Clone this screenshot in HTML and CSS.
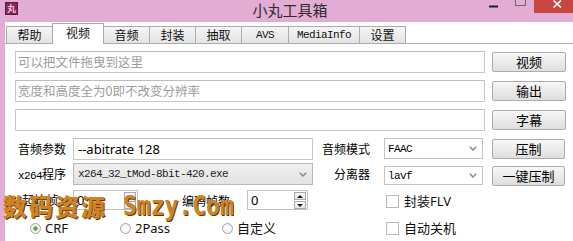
FILE: index.html
```html
<!DOCTYPE html>
<html lang="zh-CN">
<head>
<meta charset="utf-8">
<title>小丸工具箱</title>
<link rel="stylesheet" href="styles.css">
</head>
<body>
<div class="window">
  <div class="titlebar">
    <div class="tb-left"><span class="app-icon">丸</span></div>
    <span class="title">小丸工具箱</span>
    <div class="tb-right">
      <svg class="controls" width="103" height="22" viewBox="0 0 103 22">
        <line x1="19" y1="6.5" x2="28" y2="6.5" stroke="#1e1e1e" stroke-width="2"/>
        <rect x="45.5" y="-2.5" width="10" height="8" fill="none" stroke="#6a6a6a" stroke-width="1"/>
        <rect x="64" y="0" width="39" height="13" fill="#c8463f"/>
        <path d="M83.5 0.5 L91 7.5 M91 0.5 L83.5 7.5" stroke="#ffffff" stroke-width="1.7"/>
      </svg>
    </div>
  </div>
  <div class="client">
    <div class="tabs">
      <span class="tab">帮助</span>
      <span class="tab active">视频</span>
      <span class="tab">音频</span>
      <span class="tab">封装</span>
      <span class="tab">抽取</span>
      <span class="tab mono-tab avs">AVS</span>
      <span class="tab mono-tab">MediaInfo</span>
      <span class="tab">设置</span>
    </div>
    <div class="panel">
      <div class="row row-file">
        <div class="field hint">可以把文件拖曳到这里</div>
        <button class="btn">视频</button>
      </div>
      <div class="row row-file">
        <div class="field hint">宽度和高度全为0即不改变分辨率</div>
        <button class="btn">输出</button>
      </div>
      <div class="row row-file">
        <div class="field"></div>
        <button class="btn">字幕</button>
      </div>
      <div class="row row-d">
        <span class="label">音频参数</span>
        <div class="field value">--abitrate 128</div>
        <span class="label-r">音频模式</span>
        <div class="select sel-d">
          <span class="mono">FAAC</span>
          <svg class="chev" width="8" height="5" viewBox="0 0 8 5"><path d="M0.8 0.8 L4 4 L7.2 0.8" fill="none" stroke="#8a8a8a" stroke-width="1.5"/></svg>
        </div>
        <button class="btn btn-sm btn-d">压制</button>
      </div>
      <div class="row row-e">
        <span class="label"><span class="mono">x264</span>程序</span>
        <div class="select select-wide">
          <span class="mono">x264_32_tMod-8bit-420.exe</span>
          <svg class="chev" width="8" height="5" viewBox="0 0 8 5"><path d="M0.8 0.8 L4 4 L7.2 0.8" fill="none" stroke="#8a8a8a" stroke-width="1.5"/></svg>
        </div>
        <span class="label-r">分离器</span>
        <div class="select sel-e">
          <span class="mono">lavf</span>
          <svg class="chev" width="8" height="5" viewBox="0 0 8 5"><path d="M0.8 0.8 L4 4 L7.2 0.8" fill="none" stroke="#8a8a8a" stroke-width="1.5"/></svg>
        </div>
        <button class="btn btn-sm btn-e">一键压制</button>
      </div>
      <div class="row row-f">
        <span class="label label-start">起始帧</span>
        <div class="spin spin-a">
          <span class="spin-val">0</span>
          <span class="spin-btns"><span class="sb"><i class="up"></i></span><span class="sb"><i class="down"></i></span></span>
        </div>
        <span class="label-count">编码帧数</span>
        <div class="spin spin-b">
          <span class="spin-val">0</span>
          <span class="spin-btns"><span class="sb"><i class="up"></i></span><span class="sb"><i class="down"></i></span></span>
        </div>
        <span class="check check-f"><span class="box"></span>封装FLV</span>
      </div>
      <div class="row row-g">
        <span class="opt opt-crf"><span class="radio on"></span>CRF</span>
        <span class="opt opt-2pass"><span class="radio"></span>2Pass</span>
        <span class="opt opt-custom"><span class="radio"></span>自定义</span>
        <span class="check"><span class="box"></span>自动关机</span>
      </div>
      <div class="watermark"><span class="wm-cn">数码资源</span><span class="wm-en">Smzy.Com</span></div>
    </div>
  </div>
</div>
</body>
</html>
```

FILE: styles.css
```css
* { box-sizing: border-box; }
html, body { margin: 0; padding: 0; }
body {
  width: 573px;
  height: 241px;
  overflow: hidden;
  background: #e2acd4;
  font-family: "Noto Sans CJK SC", "Noto Sans", sans-serif;
  font-size: 12px;
  color: #000;
}
.window {
  width: 573px;
  height: 241px;
  background: #e2acd4;
  display: flex;
  flex-direction: column;
}
.titlebar {
  height: 22px;
  flex: none;
  display: grid;
  grid-template-columns: 1fr auto 1fr;
  align-items: start;
}
.tb-left { display: flex; }
.app-icon {
  width: 13px;
  height: 13px;
  margin: 2px 0 0 5px;
  background: #84285a;
  border: 1px solid #5c1a3e;
  color: #f0bcd9;
  font-size: 9px;
  line-height: 11px;
  text-align: center;
  font-weight: bold;
}
.title {
  font-size: 15px;
  line-height: 20px;
  color: #2b2b2b;
  padding-left: 7px;
}
.tb-right { display: flex; justify-content: flex-end; }
.controls { display: block; }

.client {
  flex: 1;
  margin-left: 5px;
  background: #fff;
  display: flex;
  flex-direction: column;
}
.tabs {
  height: 21px;
  flex: none;
  display: flex;
  align-items: flex-end;
  padding-left: 1px;
}
.tab {
  height: 17px;
  min-width: 47px;
  padding: 0 6px;
  margin-right: -1px;
  border: 1px solid #acacac;
  border-bottom: none;
  background: linear-gradient(#f5f5f5, #e3e3e3);
  text-align: center;
  font-size: 12px;
  line-height: 16px;
  color: #111;
  white-space: nowrap;
}
.tab.active {
  height: 21px;
  min-width: 52px;
  margin-bottom: -1px;
  background: #fff;
  position: relative;
  z-index: 1;
  line-height: 17px;
}
.mono-tab {
  font-family: "Liberation Mono", monospace;
  font-size: 11px;
  letter-spacing: -0.6px;
  padding: 0 8px;
}
.tab.avs { min-width: 48px; }

.panel {
  position: relative;
  flex: 1;
  border-top: 1px solid #acacac;
  padding: 7px 7px 0 10px;
  display: flex;
  flex-direction: column;
}
.row { display: flex; align-items: center; flex: none; }
.row-file { height: 22px; margin-bottom: 7px; }
.field {
  width: 470px;
  height: 22px;
  border: 1px solid #c8c8c8;
  border-top-color: #bdbdbd;
  padding-left: 2px;
  font-size: 12.5px;
  line-height: 20px;
  white-space: nowrap;
  overflow: hidden;
}
.hint { color: #9c9c9c; }
.btn {
  display: block;
  width: 74px;
  height: 20px;
  margin: 0 0 0 7px;
  padding: 0;
  border: 1px solid #acacac;
  border-radius: 2px;
  background: linear-gradient(#f7f7f7, #dedede);
  font-family: "Noto Sans CJK SC", sans-serif;
  font-size: 13px;
  line-height: 18px;
  color: #000;
  text-align: center;
}
.btn-sm { width: 73px; margin-left: 9px; }

.row-d { height: 22px; margin-bottom: 3px; align-items: flex-start; }
.row-e { height: 22px; margin-bottom: 5px; align-items: flex-start; }
.label {
  width: 58px;
  padding-left: 3px;
  line-height: 22px;
  font-size: 12px;
  white-space: nowrap;
}
.row-d .field.value {
  width: 240px;
  padding-left: 4px;
  font-family: "Noto Sans", sans-serif;
  font-size: 13px;
  color: #000;
}
.label-r {
  width: 57px;
  text-align: right;
  line-height: 22px;
  font-size: 12px;
  white-space: nowrap;
}
.mono {
  font-family: "Liberation Mono", monospace;
  font-size: 11px;
  letter-spacing: -0.6px;
}
.select {
  display: flex;
  align-items: center;
  justify-content: space-between;
  border: 1px solid #c3c3c3;
  background: #fff;
  padding: 0 5px 0 3px;
  white-space: nowrap;
}
.select .chev { display: block; flex: none; }
.sel-d { width: 99px; height: 21px; margin-left: 14px; }
.btn-d { margin-top: 1px; }
.select-wide {
  width: 240px;
  height: 22px;
  padding-left: 4px;
  background: linear-gradient(#efefef, #e3e3e3);
  border-color: #bababa;
  color: #222;
}
.sel-e { width: 99px; height: 19px; margin-left: 14px; margin-top: 3px; }
.btn-e { margin-top: 3px; }

.row-f { height: 20px; margin-bottom: 11px; }
.label-start { padding-left: 7px; line-height: 20px; }
.label-count {
  width: 48px;
  margin-left: 44px;
  font-size: 12px;
  white-space: nowrap;
}
.spin {
  height: 20px;
  border: 1px solid #c3c3c3;
  display: flex;
  justify-content: space-between;
  align-items: stretch;
  background: #fff;
}
.spin-a { width: 65px; }
.spin-b { width: 61px; margin-left: 17px; }
.spin-val {
  padding-left: 3px;
  font-family: "Noto Sans", sans-serif;
  font-size: 13px;
  line-height: 18px;
}
.spin-btns {
  width: 12px;
  margin: 1px 1px 0 0;
  display: flex;
  flex-direction: column;
}
.sb {
  height: 8px;
  border: 1px solid #a9a9a9;
  background: linear-gradient(#fbfbfb, #e4e4e4);
  display: flex;
  align-items: center;
  justify-content: center;
}
.sb + .sb { margin-top: 1px; }
.up, .down { display: block; width: 0; height: 0; border-left: 3px solid transparent; border-right: 3px solid transparent; }
.up { border-bottom: 3px solid #1a1a1a; }
.down { border-top: 3px solid #1a1a1a; }

.check {
  display: flex;
  align-items: center;
  font-family: "Noto Sans", "Noto Sans CJK SC", sans-serif;
  font-size: 13px;
  line-height: 15px;
  color: #111;
  white-space: nowrap;
}
.check-f { margin-left: 78px; align-self: flex-end; margin-bottom: 1px; }
.box {
  width: 13px;
  height: 13px;
  border: 1px solid #b9b9b9;
  background: #fff;
  margin-right: 5px;
  flex: none;
}

.row-g { height: 15px; }
.opt {
  display: flex;
  align-items: center;
  font-family: "Noto Sans", "Noto Sans CJK SC", sans-serif;
  font-size: 13px;
  line-height: 15px;
  color: #111;
  white-space: nowrap;
}
.opt-crf { margin-left: 15px; width: 90px; }
.opt-2pass { width: 102px; }
.opt-custom { width: 164px; }
.radio {
  width: 11px;
  height: 11px;
  border-radius: 50%;
  border: 1px solid #a5a5a5;
  background: radial-gradient(circle, #ffffff 0, #ececec 100%);
  margin-right: 4px;
  flex: none;
}
.radio.on {
  background: radial-gradient(circle, #5e9b3c 0, #6fa84a 1.8px, #eef3ea 2.6px, #ececec 100%);
}

.watermark {
  position: absolute;
  left: -2px;
  top: 148px;
  display: flex;
  align-items: center;
  height: 28px;
  white-space: nowrap;
  color: #cf8421;
  text-shadow: 1px 1px 0 #5e360c;
  font-weight: 900;
}
.wm-cn {
  font-family: "Noto Sans CJK SC", sans-serif;
  font-size: 24px;
  line-height: 28px;
  letter-spacing: 2px;
}
.wm-en {
  display: inline-block;
  margin-left: 16px;
  font-family: "DejaVu Sans Mono", "Liberation Mono", monospace;
  font-size: 23px;
  line-height: 28px;
  font-weight: bold;
  transform: scaleY(1.15);
}
```
